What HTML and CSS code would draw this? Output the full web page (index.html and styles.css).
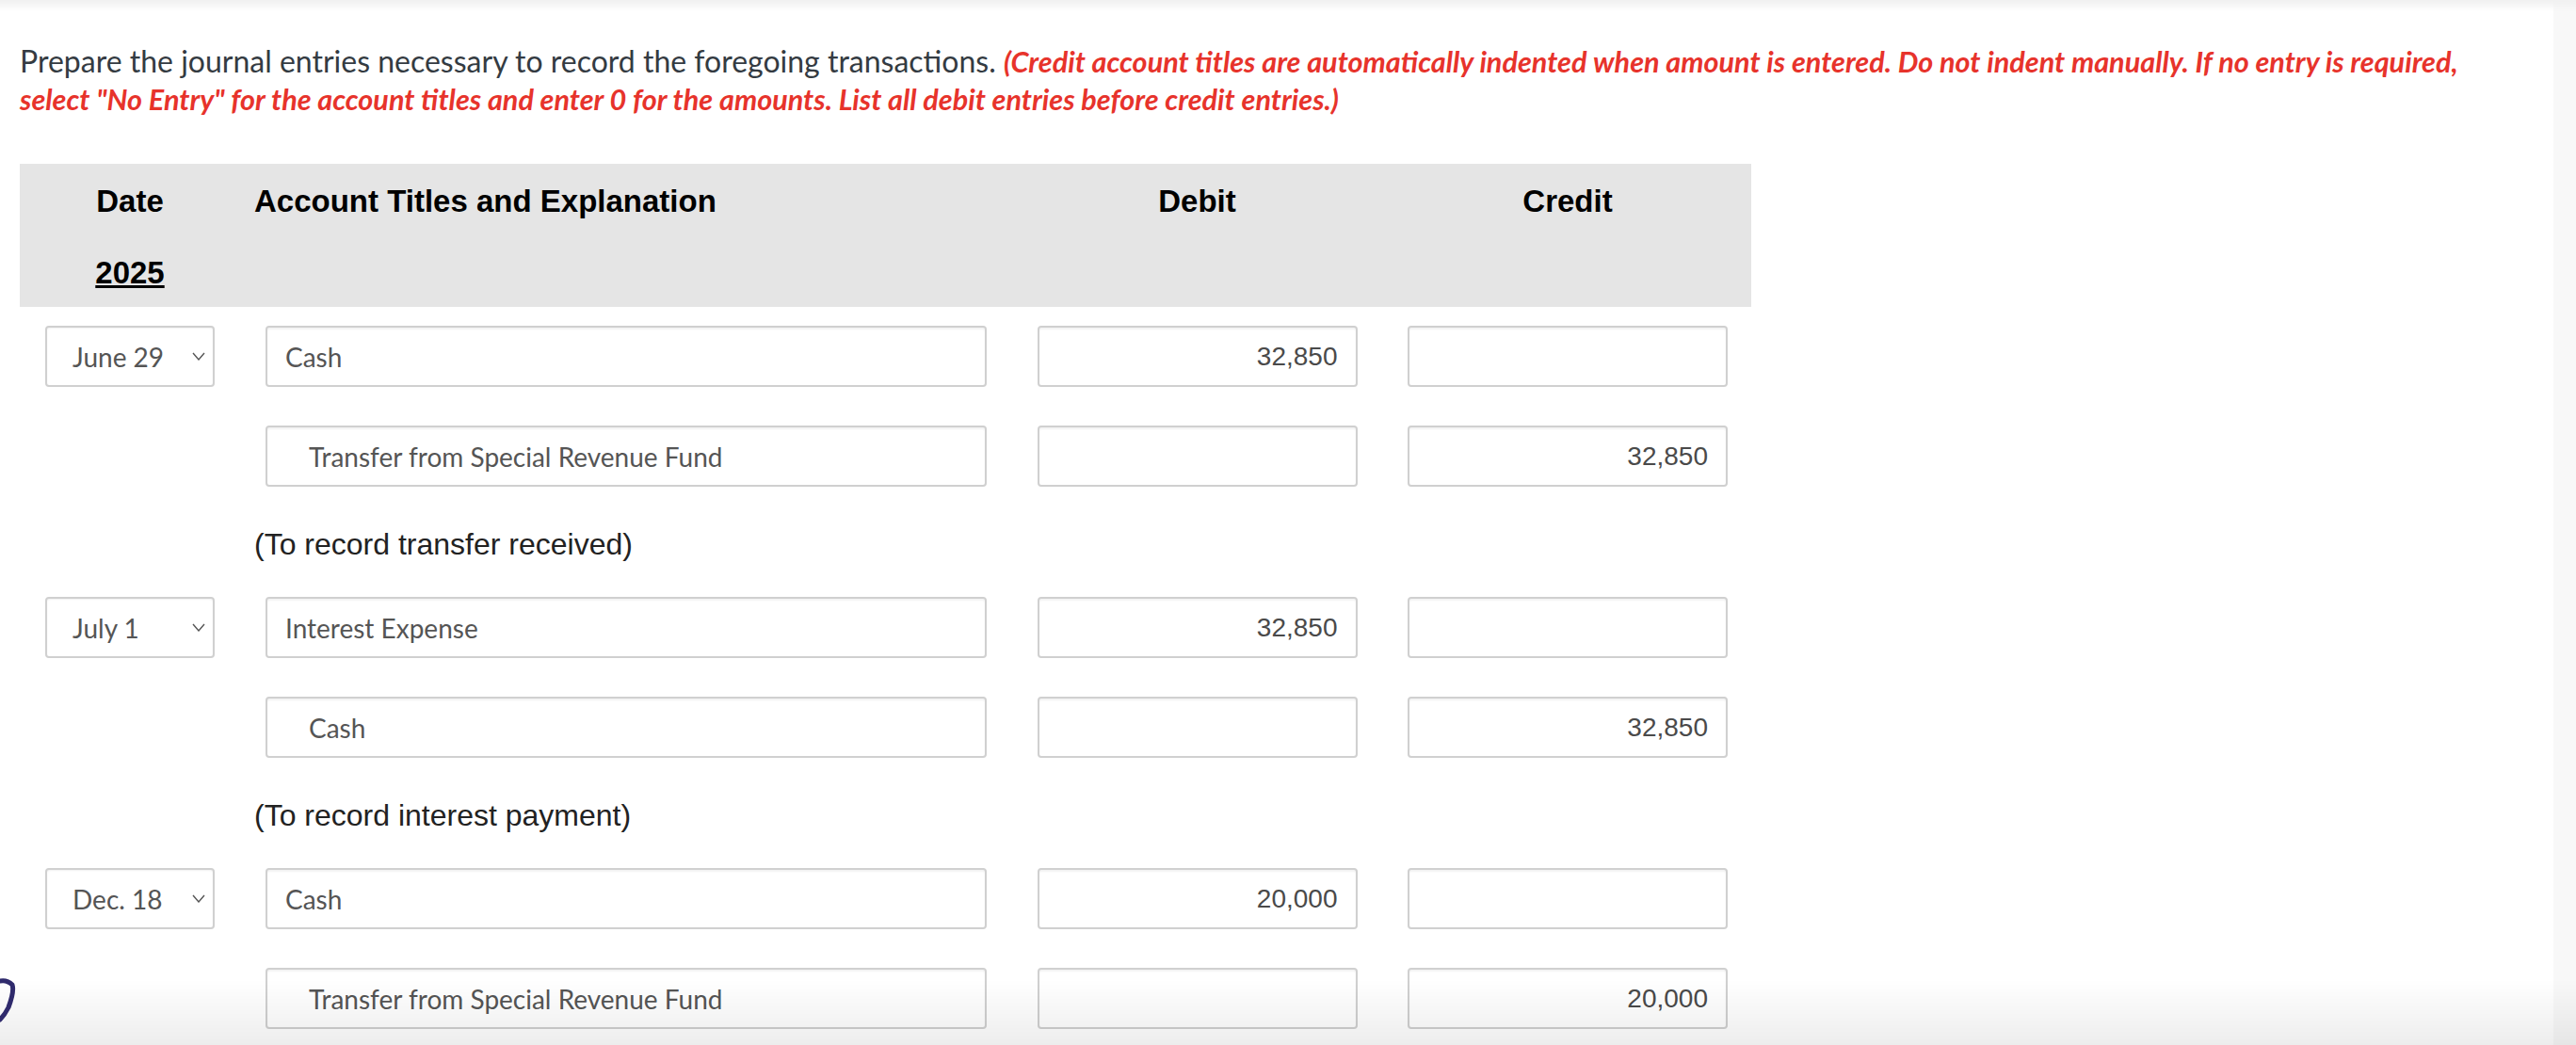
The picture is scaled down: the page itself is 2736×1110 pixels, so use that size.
FILE: index.html
```html
<!DOCTYPE html>
<html>
<head>
<meta charset="utf-8">
<link rel="stylesheet" href="styles.css">
</head>
<body>
<div class="page">
  <main class="main">
    <p class="instructions">Prepare the journal entries necessary to record the foregoing transactions. <em class="note">(Credit account titles are automatically indented when amount is entered. Do not indent manually. If no entry is required,<br>select "No Entry" for the account titles and enter 0 for the amounts. List all debit entries before credit entries.)</em></p>

    <div class="journal">
      <div class="head">
        <div class="hrow">
          <div class="hc c-date">Date</div>
          <div class="hc c-acct">Account Titles and Explanation</div>
          <div class="hc c-amt">Debit</div>
          <div class="hc c-amt">Credit</div>
        </div>
        <div class="hrow">
          <div class="hc c-date"><u>2025</u></div>
        </div>
      </div>

      <div class="body">
        <div class="row">
          <div class="c-date"><div class="sel"><span>June 29</span><svg class="chev" viewBox="0 0 14 9"><polyline points="1,1 7,8 13,1"/></svg></div></div>
          <div class="c-acct"><div class="field">Cash</div></div>
          <div class="c-amt"><div class="field num">32,850</div></div>
          <div class="c-amt"><div class="field num"></div></div>
        </div>
        <div class="row">
          <div class="c-date"></div>
          <div class="c-acct"><div class="field credit">Transfer from Special Revenue Fund</div></div>
          <div class="c-amt"><div class="field num"></div></div>
          <div class="c-amt"><div class="field num">32,850</div></div>
        </div>
        <div class="expl">(To record transfer received)</div>

        <div class="row">
          <div class="c-date"><div class="sel"><span>July 1</span><svg class="chev" viewBox="0 0 14 9"><polyline points="1,1 7,8 13,1"/></svg></div></div>
          <div class="c-acct"><div class="field">Interest Expense</div></div>
          <div class="c-amt"><div class="field num">32,850</div></div>
          <div class="c-amt"><div class="field num"></div></div>
        </div>
        <div class="row">
          <div class="c-date"></div>
          <div class="c-acct"><div class="field credit">Cash</div></div>
          <div class="c-amt"><div class="field num"></div></div>
          <div class="c-amt"><div class="field num">32,850</div></div>
        </div>
        <div class="expl">(To record interest payment)</div>

        <div class="row">
          <div class="c-date"><div class="sel"><span>Dec. 18</span><svg class="chev" viewBox="0 0 14 9"><polyline points="1,1 7,8 13,1"/></svg></div></div>
          <div class="c-acct"><div class="field">Cash</div></div>
          <div class="c-amt"><div class="field num">20,000</div></div>
          <div class="c-amt"><div class="field num"></div></div>
        </div>
        <div class="row">
          <div class="c-date"></div>
          <div class="c-acct"><div class="field credit">Transfer from Special Revenue Fund</div></div>
          <div class="c-amt"><div class="field num"></div></div>
          <div class="c-amt"><div class="field num">20,000</div></div>
        </div>
      </div>
    </div>
  </main>
  <aside class="track"></aside>
</div>
<div class="top-shade"></div>
<div class="bottom-shade"></div>
<svg class="mark" viewBox="0 0 20 50"><path d="M0 4 C5 3 9 4 13 8 C15 14 12 24 9 32 C6 38 3 42 0 45"/></svg>
</body>
</html>
```

FILE: styles.css
```css
html, body {
  margin: 0;
  padding: 0;
  background: #fff;
  height: 1110px;
  overflow: hidden;
}
.page {
  display: flex;
  height: 1110px;
}
.main {
  flex: 1;
  padding: 0 0 0 21px;
}
.track {
  width: 24px;
  background: #f8f8f8;
}
.instructions {
  margin: 45px 0 0 0;
  height: 80px;
  font-family: Lato, "Open Sans", sans-serif;
  font-size: 32px;
  line-height: 40px;
  color: #343b42;
  white-space: nowrap;
}
.note {
  color: #e7332b;
  font-weight: bold;
  font-style: italic;
  font-size: 30.6px;
  line-height: 1;
}
.journal {
  margin-top: 49px;
  width: 1839px;
}
.head {
  background: #e5e5e5;
  padding: 20px 0 16px 0;
  display: flex;
  flex-direction: column;
  gap: 36px;
}
.hrow, .row {
  display: grid;
  grid-template-columns: 234px 818px 397px 390px;
}
.hc {
  font-family: "Liberation Sans", Arial, sans-serif;
  font-weight: bold;
  font-size: 33px;
  line-height: 40px;
  color: #000;
}
.hc.c-date { text-align: center; }
.hc.c-acct { padding-left: 15px; }
.hc.c-amt { text-align: center; }
.body {
  padding-top: 20px;
  display: flex;
  flex-direction: column;
  gap: 41px;
}
.row { height: 65px; }
.c-date .sel {
  margin-left: 27px;
  width: 180px;
  height: 65px;
  box-sizing: border-box;
  border: 2px solid #d0d0d0;
  border-radius: 4px;
  box-shadow: inset 0 1px 2px rgba(0,0,0,0.06);
  display: flex;
  align-items: center;
  padding: 0 8px 0 27px;
  font-family: Lato, "Open Sans", sans-serif;
  font-size: 28px;
  color: #555;
}
.sel span { flex: 1; }
.chev {
  width: 14px;
  height: 9px;
  fill: none;
  stroke: #555;
  stroke-width: 1.4;
}
.field {
  box-sizing: border-box;
  height: 65px;
  border: 2px solid #d0d0d0;
  border-radius: 4px;
  box-shadow: inset 0 2px 2px rgba(0,0,0,0.05);
  display: flex;
  align-items: center;
  font-family: Lato, "Open Sans", sans-serif;
  font-size: 28px;
  color: #555;
  background: #fff;
}
.c-acct .field {
  margin-left: 27px;
  width: 766px;
  padding-left: 19px;
}
.c-acct .field.credit { padding-left: 44px; }
.c-amt .field.num {
  margin: 0 auto;
  width: 340px;
  justify-content: flex-end;
  padding-right: 19px;
  font-family: "Liberation Sans", Arial, sans-serif;
  color: #4a4a4a;
}
.expl {
  height: 35px;
  line-height: 40px;
  padding-left: 249px;
  font-family: "Liberation Sans", Arial, sans-serif;
  font-size: 32px;
  color: #222;
}
.top-shade {
  position: fixed;
  top: 0;
  left: 0;
  right: 0;
  height: 12px;
  background: linear-gradient(#f0f0f0, rgba(255,255,255,0));
}
.bottom-shade {
  position: fixed;
  left: 0;
  right: 0;
  bottom: 0;
  height: 70px;
  background: linear-gradient(rgba(0,0,0,0), rgba(0,0,0,0.07));
  pointer-events: none;
}
.mark {
  position: fixed;
  left: 0;
  top: 1038px;
  width: 20px;
  height: 50px;
  fill: none;
  stroke: #2f2a6c;
  stroke-width: 5;
  stroke-linecap: round;
}
```
